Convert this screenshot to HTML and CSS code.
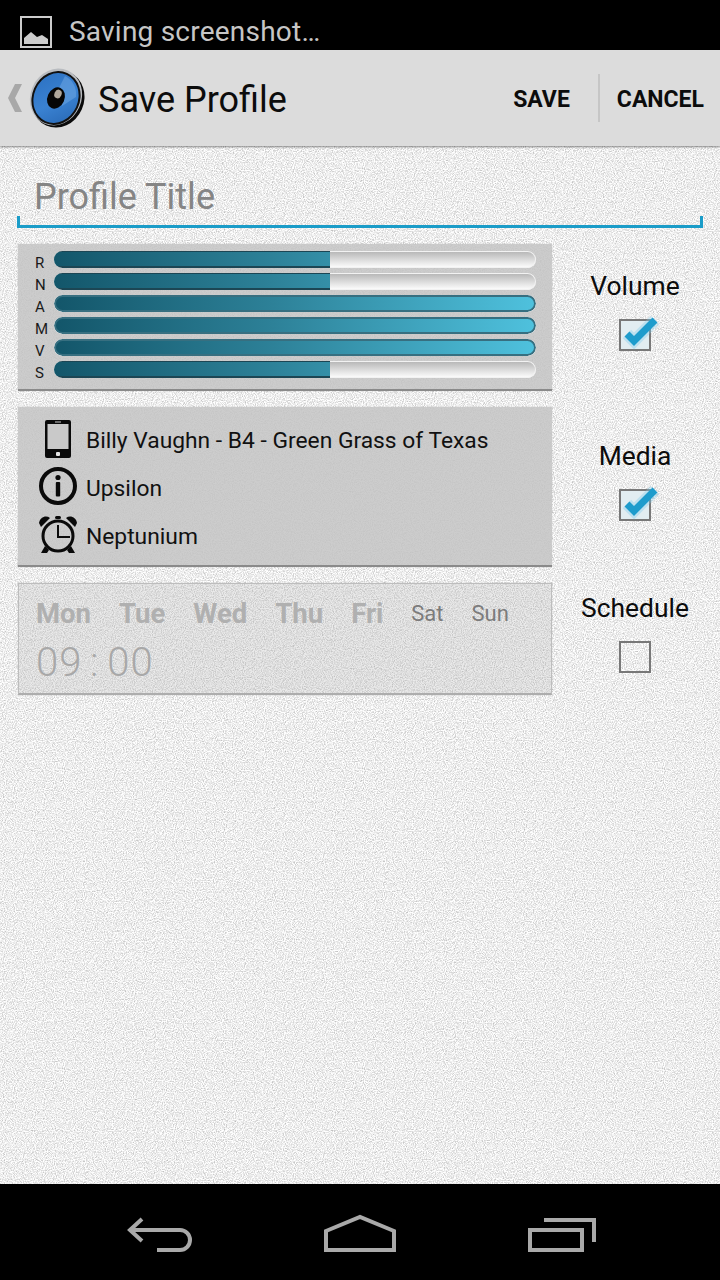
FILE: index.html
```html
<!DOCTYPE html>
<html lang="en">
<head>
<meta charset="utf-8">
<title>Save Profile</title>
<link rel="stylesheet" href="styles.css">
</head>
<body>
<div class="screen">
  <header class="status">
    <svg class="status-icon" width="32" height="32" viewBox="0 0 32 32">
      <rect x="1" y="1" width="30" height="30" fill="none" stroke="#ccc" stroke-width="2"/>
      <path d="M4 28V22L11 16L17 21L22 19L28 23V28Z" fill="#ccc"/>
    </svg>
    <span class="status-text">Saving screenshot…</span>
  </header>

  <div class="actionbar">
    <svg class="chevron" width="16" height="28" viewBox="0 0 16 28">
      <path d="M15 0H8L1 14L8 28H15L8 14Z" fill="#a8a8a8"/>
    </svg>
    <svg class="logo" width="62" height="66" viewBox="0 0 62 66">
      <defs>
        <linearGradient id="cone" x1="0" y1="0" x2="1" y2="1">
          <stop offset="0" stop-color="#2a6fc0"/>
          <stop offset="0.55" stop-color="#3a82d2"/>
          <stop offset="1" stop-color="#2766b2"/>
        </linearGradient>
      </defs>
      <ellipse cx="32" cy="35" rx="26" ry="29" transform="rotate(24 32 35)" fill="#0a0a0a"/>
      <ellipse cx="30" cy="33" rx="25.500" ry="29" transform="rotate(24 30 33)" fill="#b9bcc0"/>
      <ellipse cx="30" cy="34" rx="24" ry="27.500" transform="rotate(24 30 34)" fill="#111"/>
      <ellipse cx="30" cy="34" rx="22" ry="25.500" transform="rotate(24 30 34)" fill="url(#cone)"/>
      <path d="M39 12C47 16 51 24 50 33L36 42L32 26Z" fill="#6ea6e2" opacity="0.55"/>
      <ellipse cx="30" cy="34" rx="8.500" ry="11" transform="rotate(24 30 34)" fill="#060606"/>
      <ellipse cx="32" cy="30" rx="3.500" ry="4.500" transform="rotate(24 32 30)" fill="#b0a89c"/>
    </svg>
    <h1 class="screen-title">Save Profile</h1>
    <div class="actions">
      <span class="action action-save">SAVE</span>
      <span class="action-divider"></span>
      <span class="action">CANCEL</span>
    </div>
  </div>

  <main class="content">
    <div class="title-field">Profile Title</div>

    <section class="row">
      <div class="panel levels">
        <div class="level"><span class="level-name">R</span><div class="track"><div class="fill" style="width:57.26%"></div></div></div>
        <div class="level"><span class="level-name">N</span><div class="track"><div class="fill" style="width:57.26%"></div></div></div>
        <div class="level"><span class="level-name">A</span><div class="track"><div class="fill fill-full" style="width:100%"></div></div></div>
        <div class="level"><span class="level-name">M</span><div class="track"><div class="fill fill-full" style="width:100%"></div></div></div>
        <div class="level"><span class="level-name">V</span><div class="track"><div class="fill fill-full" style="width:100%"></div></div></div>
        <div class="level"><span class="level-name">S</span><div class="track"><div class="fill" style="width:57.26%"></div></div></div>
      </div>
      <div class="side side-volume">
        <span class="side-label">Volume</span>
        <span class="checkbox checkbox-on">
          <svg class="tick" width="32" height="32" viewBox="0 0 32 32">
            <polyline class="tick-glow" points="8,15 15,22 36,1"/>
            <polyline class="tick-line" points="8,15 15,22 36,1"/>
          </svg>
        </span>
      </div>
    </section>

    <section class="row">
      <div class="panel media">
        <div class="media-row">
          <svg class="media-icon" width="40" height="40" viewBox="0 0 40 40">
            <rect x="7" y="0" width="26" height="38" rx="2" fill="#0a0a0a"/>
            <rect x="9.500" y="4" width="21" height="25" fill="#c9c9c9"/>
            <rect x="17" y="1.500" width="6" height="1" fill="#c9c9c9"/>
            <rect x="18" y="32" width="4" height="4" rx="1" fill="#e4e4e4"/>
          </svg>
          <span class="media-text">Billy Vaughn - B4 - Green Grass of Texas</span>
        </div>
        <div class="media-row">
          <svg class="media-icon" width="40" height="40" viewBox="0 0 40 40">
            <circle cx="20" cy="18" r="17" fill="none" stroke="#0a0a0a" stroke-width="4"/>
            <circle cx="20" cy="9.500" r="2.600" fill="#0a0a0a"/>
            <rect x="17.800" y="14" width="4.400" height="14.500" rx="1" fill="#0a0a0a"/>
          </svg>
          <span class="media-text">Upsilon</span>
        </div>
        <div class="media-row">
          <svg class="media-icon" width="40" height="40" viewBox="0 0 40 40">
            <circle cx="20" cy="20" r="15" fill="none" stroke="#0a0a0a" stroke-width="3"/>
            <path d="M20 9V21H32" fill="none" stroke="#0a0a0a" stroke-width="2"/>
            <path d="M1 7C2 1 8 -1 12 2L3 11Z" fill="#0a0a0a"/>
            <path d="M39 7C38 1 32 -1 28 2L37 11Z" fill="#0a0a0a"/>
            <rect x="17" y="0" width="6" height="3" rx="1.500" fill="#0a0a0a"/>
            <path d="M7 30L3 37H9L11 34Z" fill="#0a0a0a"/>
            <path d="M33 30L37 37H31L29 34Z" fill="#0a0a0a"/>
          </svg>
          <span class="media-text">Neptunium</span>
        </div>
      </div>
      <div class="side side-media">
        <span class="side-label">Media</span>
        <span class="checkbox checkbox-on">
          <svg class="tick" width="32" height="32" viewBox="0 0 32 32">
            <polyline class="tick-glow" points="8,15 15,22 36,1"/>
            <polyline class="tick-line" points="8,15 15,22 36,1"/>
          </svg>
        </span>
      </div>
    </section>

    <section class="row">
      <div class="panel schedule">
        <div class="days">
          <span class="day">Mon</span>
          <span class="day">Tue</span>
          <span class="day">Wed</span>
          <span class="day">Thu</span>
          <span class="day">Fri</span>
          <span class="day day-off">Sat</span>
          <span class="day day-off">Sun</span>
        </div>
        <div class="time">09 : 00</div>
      </div>
      <div class="side side-schedule">
        <span class="side-label">Schedule</span>
        <span class="checkbox"></span>
      </div>
    </section>
  </main>

  <nav class="navbar">
    <svg width="72" height="44" viewBox="0 0 72 44">
      <path d="M18 5L6 16L18 27M6 16H56A10 10 0 0 1 56 36H33" fill="none" stroke="#a9a9a9" stroke-width="4"/>
    </svg>
    <svg width="72" height="44" viewBox="0 0 72 44">
      <path d="M2 17L36 3L70 17V36H2Z" fill="none" stroke="#a9a9a9" stroke-width="4"/>
    </svg>
    <svg width="72" height="44" viewBox="0 0 72 44">
      <rect x="6" y="16" width="52" height="20" fill="none" stroke="#a9a9a9" stroke-width="4"/>
      <path d="M20 6H70V28" fill="none" stroke="#a9a9a9" stroke-width="4"/>
    </svg>
  </nav>
</div>
</body>
</html>
```
FILE: styles.css
```css
:root {
  --grain: url("data:image/svg+xml,%3Csvg xmlns='http://www.w3.org/2000/svg' width='300' height='300'%3E%3Cfilter id='n' color-interpolation-filters='sRGB' x='0' y='0' width='100%25' height='100%25'%3E%3CfeTurbulence type='fractalNoise' baseFrequency='0.9' numOctaves='2' stitchTiles='stitch'/%3E%3CfeColorMatrix values='0.5 0 0 0 0.68 0.5 0 0 0 0.68 0.5 0 0 0 0.68 0 0 0 0 1'/%3E%3C/filter%3E%3Crect width='300' height='300' filter='url(%23n)'/%3E%3C/svg%3E");
}

* {
  box-sizing: border-box;
}

html,
body {
  margin: 0;
  padding: 0;
}

body {
  font-family: Roboto, "Liberation Sans", sans-serif;
  background: #000;
}

.screen {
  width: 720px;
  height: 1280px;
  display: flex;
  flex-direction: column;
  overflow: hidden;
}

/* status bar */
.status {
  height: 50px;
  flex: none;
  background: #000;
  display: flex;
  align-items: flex-start;
  padding: 16px 0 0 20px;
  overflow: hidden;
}

.status-text {
  margin: -2px 0 0 17px;
  color: #c6c6c6;
  font-size: 28px;
  line-height: 36px;
  letter-spacing: 0.22px;
  white-space: nowrap;
}

/* action bar */
.actionbar {
  height: 96px;
  flex: none;
  background: #dcdcdc;
  display: flex;
  align-items: center;
  padding-left: 7px;
  box-shadow: 0 1px 2px rgba(0, 0, 0, 0.45);
  position: relative;
  z-index: 1;
}

.chevron {
  flex: none;
}

.logo {
  flex: none;
  margin: -2px 0 0 3px;
}

.screen-title {
  margin: 3px 0 0 10px;
  font-size: 36px;
  font-weight: 400;
  color: #0c0c0c;
  white-space: nowrap;
}

.actions {
  margin-left: auto;
  display: flex;
  align-items: center;
  padding-right: 16px;
}

.action {
  margin-top: 2px;
  font-size: 23px;
  font-weight: 700;
  color: #0c0c0c;
}

.action-divider {
  width: 2px;
  height: 48px;
  margin: 0 17px 0 28px;
  background: #c6c6c6;
}

/* page body */
.content {
  flex: 1;
  background: #eee var(--grain);
  display: flex;
  flex-direction: column;
  gap: 16px;
}

.title-field {
  position: relative;
  height: 82px;
  margin: 0 17px;
  padding: 31px 0 0 17px;
  font-size: 36px;
  line-height: 40px;
  color: #858585;
  border-bottom: 3px solid #1a9cc8;
}

.title-field::before,
.title-field::after {
  content: "";
  position: absolute;
  bottom: 0;
  width: 3px;
  height: 9px;
  background: #1a9cc8;
}

.title-field::before {
  left: 0;
}

.title-field::after {
  right: 0;
}

.row {
  display: flex;
  align-items: flex-start;
  padding-left: 18px;
}

.panel {
  width: 534px;
  flex: none;
  background: linear-gradient(rgba(196, 196, 196, 0.85), rgba(196, 196, 196, 0.85)), var(--grain);
  border-bottom: 2px solid #8a8a8a;
  box-shadow: 0 0 1px rgba(0, 0, 0, 0.25);
}

/* level meters */
.levels {
  height: 147px;
  padding: 7px 16px 0 17px;
  display: flex;
  flex-direction: column;
  gap: 1px;
}

.level {
  display: flex;
  align-items: flex-start;
}

.level-name {
  flex: none;
  width: 19px;
  height: 17px;
  margin-top: 4px;
  font-size: 15px;
  line-height: 17px;
  color: #1a1a1a;
}

.track {
  flex: 1;
  height: 17px;
  border-radius: 9px;
  overflow: hidden;
  background: linear-gradient(#b4b4b4, #dedede 55%, #fff);
  box-shadow: inset 0 0 0 1px #f2f2f2;
}

.fill {
  height: 100%;
  background: linear-gradient(90deg, #13566a, #2d8198 45%, #4fc2de) 0 0 / 482px 100%;
  border-top: 1px solid #1c4654;
  border-bottom: 2px solid #1c4654;
}

.fill-full {
  border: 2px solid #376f80;
  border-radius: 9px;
}

/* side checkboxes */
.side {
  flex: 1;
  display: flex;
  flex-direction: column;
  align-items: center;
  gap: 18px;
  max-width: 166px;
}

.side-volume {
  padding-top: 27px;
}

.side-media {
  padding-top: 34px;
}

.side-schedule {
  padding-top: 10px;
}

.side-label {
  font-size: 26.4px;
  line-height: 30px;
  color: #0c0c0c;
  white-space: nowrap;
}

.checkbox {
  position: relative;
  width: 32px;
  height: 32px;
  border: 2px solid #787878;
}

.checkbox-on {
  background: #e2edf1;
}

.tick {
  position: absolute;
  left: -2px;
  top: -2px;
  overflow: visible;
}

.tick polyline {
  fill: none;
  stroke-linejoin: miter;
}

.tick-glow {
  stroke: rgba(120, 200, 235, 0.35);
  stroke-width: 12;
}

.tick-line {
  stroke: #1e9ccc;
  stroke-width: 7;
}

/* now-playing rows */
.media {
  height: 160px;
  padding: 9px 0 0 20px;
  display: flex;
  flex-direction: column;
}

.media-row {
  height: 48px;
  display: flex;
  align-items: center;
  gap: 8px;
}

.media-icon {
  flex: none;
  overflow: visible;
}

.media-text {
  font-size: 22.8px;
  color: #111;
  white-space: nowrap;
}

/* schedule, shown disabled */
.schedule {
  height: 112px;
  padding: 14px 0 0 17px;
  background: linear-gradient(rgba(186, 186, 186, 0.3), rgba(186, 186, 186, 0.3)), var(--grain);
  border: 1px solid #bdbdbd;
  border-bottom: 2px solid #adadad;
}

.days {
  display: flex;
  align-items: center;
  gap: 28px;
  height: 32px;
  color: #b0b0b0;
}

.day {
  font-size: 27.5px;
  font-weight: 700;
  line-height: 32px;
}

.day-off {
  font-size: 22px;
  font-weight: 400;
  color: #7c7c7c;
}

.time {
  margin-top: 11px;
  font-size: 40px;
  line-height: 44px;
  font-weight: 300;
  letter-spacing: 1px;
  word-spacing: -3px;
  color: #a8a8a8;
}

/* system navigation */
.navbar {
  height: 96px;
  flex: none;
  background: #000;
  display: flex;
  justify-content: center;
  gap: 128px;
  padding-top: 30px;
}
```
